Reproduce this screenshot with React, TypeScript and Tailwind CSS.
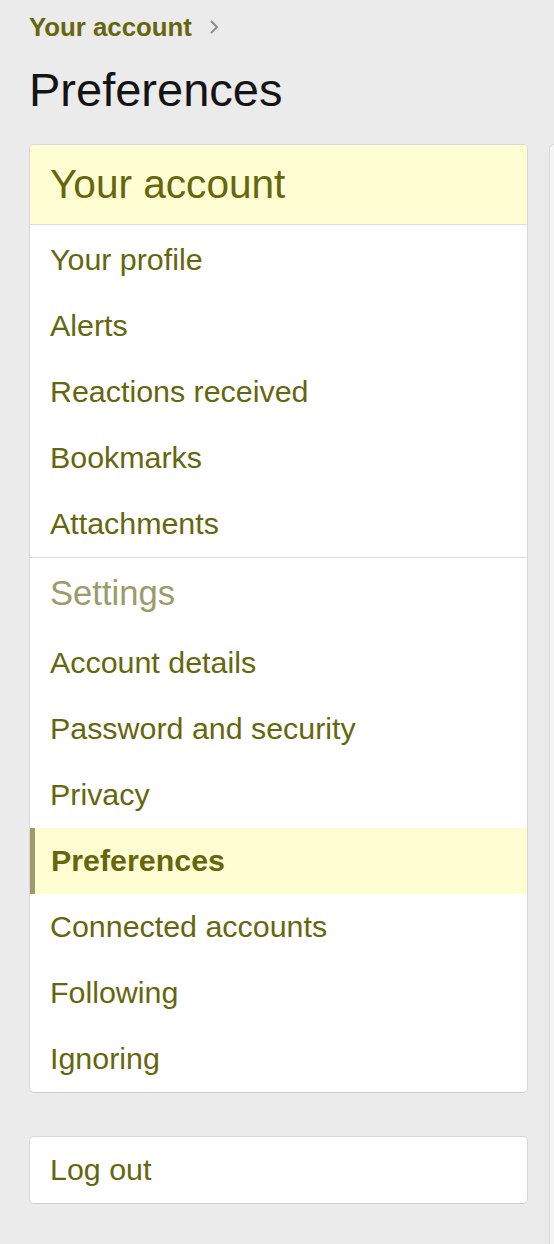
import React from "react";

const font = { fontFamily: '"Liberation Sans", Arial, sans-serif' };

function Row({ label, active }: { label: string; active?: boolean }) {
  if (active) {
    return (
      <div className="h-[66px] flex items-center bg-[#fefed2] border-l-[5px] border-[#9b9b6b] pl-[16px] text-[30.4px] font-bold text-[#66660d]">
        {label}
      </div>
    );
  }
  return (
    <div className="h-[66px] flex items-center pl-[20px] text-[30.4px] text-[#66660d]">
      {label}
    </div>
  );
}

export default function App() {
  return (
    <div className="w-[554px] min-h-[1244px] bg-[#ebebeb] overflow-hidden" style={font}>
      <div className="pl-[29px]">
        <div className="mt-[12px] flex items-center h-[30px] leading-[30px]">
          <span className="text-[25.8px] font-bold text-[#66660d]">Your account</span>
          <svg className="ml-[17px]" width="10" height="16" viewBox="0 0 10 16" fill="none">
            <path d="M2 2 L8 8 L2 14" stroke="#8c8c8c" strokeWidth="2" />
          </svg>
        </div>
        <h1 className="mt-[20px] text-[47px] leading-[56px] text-[#141414] font-normal">Preferences</h1>
        <div className="mt-[26px] flex gap-[21px] items-start">
          <div className="w-[499px] shrink-0 flex flex-col">
            <div className="bg-white border border-[#d8d8d8] border-b-[#cdcdcd] rounded-[5px] overflow-hidden">
              <div className="h-[80px] flex items-center pl-[20px] bg-[#fefed2] border-b border-[#dcdcdc] text-[40.6px] text-[#66660d]">
                Your account
              </div>
              <div className="pt-[2px]">
                <Row label="Your profile" />
                <Row label="Alerts" />
                <Row label="Reactions received" />
                <Row label="Bookmarks" />
                <Row label="Attachments" />
              </div>
              <div className="border-t border-[#dcdcdc]">
                <div className="h-[72px] flex items-center pl-[20px] text-[34.6px] text-[#9b9b6b]">
                  Settings
                </div>
                <Row label="Account details" />
                <Row label="Password and security" />
                <Row label="Privacy" />
                <Row label="Preferences" active />
                <Row label="Connected accounts" />
                <Row label="Following" />
                <Row label="Ignoring" />
              </div>
            </div>
            <div className="mt-[43px] bg-white border border-[#d8d8d8] border-b-[#cdcdcd] rounded-[5px]">
              <div className="h-[66px] flex items-center pl-[20px] text-[30.4px] text-[#66660d]">
                Log out
              </div>
            </div>
          </div>
          <div className="w-[300px] h-[1150px] shrink-0 bg-[#f4f4f4] border border-[#d8d8d8] rounded-[5px]" />
        </div>
      </div>
    </div>
  );
}
